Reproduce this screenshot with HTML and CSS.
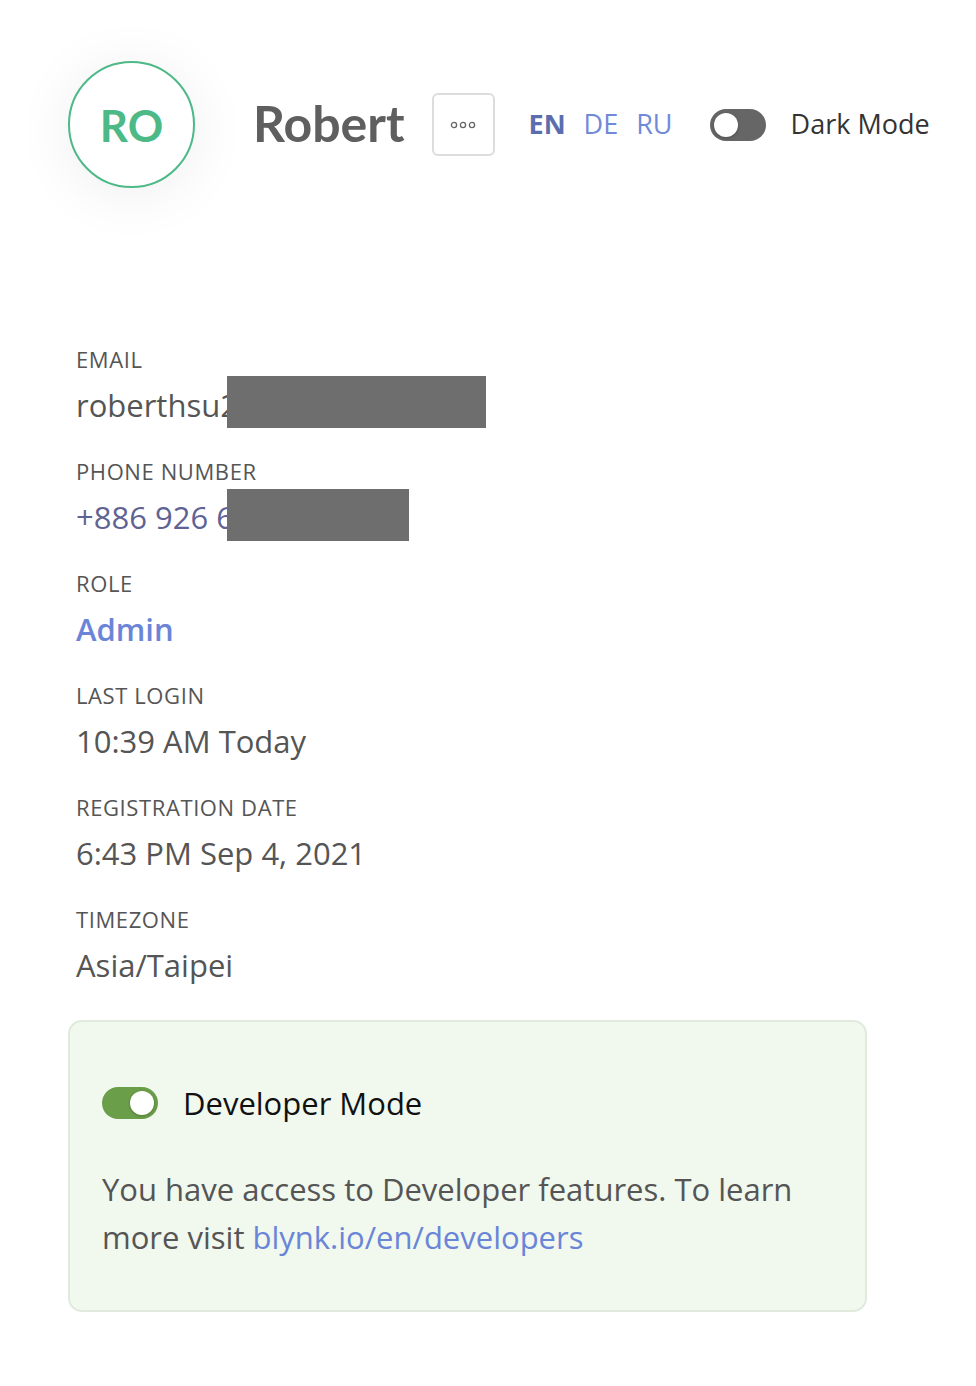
FILE: index.html
```html
<!DOCTYPE html>
<html lang="en">
<head>
<meta charset="utf-8">
<title>Profile</title>
<link rel="stylesheet" href="styles.css">
</head>
<body>
<div class="page">
  <header class="header">
    <div class="avatar">RO</div>
    <h1 class="name">Robert</h1>
    <button class="more" type="button" aria-label="More">
      <svg width="26" height="8" viewBox="0 0 26 8">
        <circle cx="4" cy="4" r="2.6" fill="none" stroke="#666" stroke-width="1.3"/>
        <circle cx="13" cy="4" r="2.6" fill="none" stroke="#666" stroke-width="1.3"/>
        <circle cx="22" cy="4" r="2.6" fill="none" stroke="#666" stroke-width="1.3"/>
      </svg>
    </button>
    <nav class="langs">
      <span class="lang active">EN</span>
      <span class="lang">DE</span>
      <span class="lang">RU</span>
    </nav>
    <div class="toggle-row">
      <span class="toggle dark"><span class="knob"></span></span>
      <span class="toggle-label">Dark Mode</span>
    </div>
  </header>

  <section class="info">
    <div class="field">
      <div class="label">EMAIL</div>
      <div class="value masked">roberthsu2<span class="redact redact-email"></span></div>
    </div>
    <div class="field">
      <div class="label">PHONE NUMBER</div>
      <div class="value phone masked">+886 926 6<span class="redact redact-phone"></span></div>
    </div>
    <div class="field">
      <div class="label">ROLE</div>
      <div class="value role">Admin</div>
    </div>
    <div class="field">
      <div class="label">LAST LOGIN</div>
      <div class="value">10:39 AM Today</div>
    </div>
    <div class="field">
      <div class="label">REGISTRATION DATE</div>
      <div class="value">6:43 PM Sep 4, 2021</div>
    </div>
    <div class="field">
      <div class="label">TIMEZONE</div>
      <div class="value">Asia/Taipei</div>
    </div>
  </section>

  <section class="dev-box">
    <div class="dev-row">
      <span class="toggle on"><span class="knob"></span></span>
      <span class="dev-title">Developer Mode</span>
    </div>
    <p class="dev-text">You have access to Developer features. To learn<br>more visit <a href="#" class="link">blynk.io/en/developers</a></p>
  </section>
</div>
</body>
</html>
```

FILE: styles.css
```css
* { box-sizing: border-box; }
html, body { margin: 0; padding: 0; background: #fff; }
body {
  font-family: "Open Sans", "Noto Sans", sans-serif;
  color: #555;
}
.page {
  width: 976px;
  min-height: 1386px;
  padding: 61px 0 0 68px;
}

/* Header */
.header {
  display: flex;
  align-items: center;
  height: 127px;
}
.avatar {
  width: 127px;
  height: 127px;
  border-radius: 50%;
  border: 2px solid #4cb987;
  background: #fff;
  box-shadow: 0 6px 60px rgba(0, 0, 0, 0.07);
  display: flex;
  align-items: center;
  justify-content: center;
  font-family: "Lato", "Open Sans", sans-serif;
  font-weight: 700;
  font-size: 44px;
  color: #4cb987;
  flex: none;
}
.name {
  margin: 0 0 3px 58px;
  font-family: "Lato", "Open Sans", sans-serif;
  font-weight: 700;
  font-size: 50px;
  color: #5f5f5f;
  line-height: 1;
}
.more {
  margin-left: 27px;
  width: 63px;
  height: 63px;
  border: 2px solid #dcdcdc;
  border-radius: 6px;
  background: #fff;
  display: flex;
  align-items: center;
  justify-content: center;
  padding: 0;
}
.langs {
  display: flex;
  gap: 18px;
  margin: 0 0 2px 34px;
  font-size: 27px;
}
.lang { color: #6f8ad8; }
.lang.active { color: #5a6eaf; font-weight: 700; }
.toggle-row {
  display: flex;
  align-items: center;
  margin-left: 37px;
}
.toggle {
  position: relative;
  width: 56px;
  height: 32px;
  border-radius: 16px;
  flex: none;
}
.toggle .knob {
  position: absolute;
  top: 4px;
  width: 24px;
  height: 24px;
  border-radius: 50%;
  background: #fff;
  box-shadow: 0 1px 3px rgba(0,0,0,0.25);
}
.toggle.dark { background: #666; }
.toggle.dark .knob { left: 4px; }
.toggle.on { background: #6a9e49; }
.toggle.on .knob { right: 4px; }
.toggle-label {
  margin: 0 0 2px 25px;
  font-size: 27px;
  color: #333;
}

/* Info */
.info {
  margin-top: 158px;
  padding-left: 8px;
}
.field { margin-bottom: 33px; }
.label {
  font-size: 22px;
  letter-spacing: 0.6px;
  line-height: 26px;
  color: #555;
  margin-bottom: 13px;
}
.value {
  font-size: 31px;
  line-height: 40px;
  color: #555;
}
.masked { position: relative; }
.redact {
  position: absolute;
  left: 151px;
  background: #6e6e6e;
  height: 52px;
}
.redact-email { top: -9px; width: 259px; }
.redact-phone { top: -8px; width: 182px; }
.phone { color: #5e6394; }
.role { color: #6a85d8; font-weight: 600; }

/* Developer box */
.dev-box {
  margin-top: 35px;
  width: 799px;
  border: 2px solid #e1eadd;
  border-radius: 14px;
  background: #f1f8ee;
  padding: 61px 40px 49px 32px;
}
.dev-row {
  display: flex;
  align-items: center;
  height: 40px;
}
.dev-title {
  margin-left: 25px;
  font-size: 31px;
  color: #111;
}
.dev-text {
  margin: 42px 0 0 0;
  font-size: 31px;
  line-height: 48px;
  color: #555;
}
.link { color: #6a85d8; text-decoration: none; }
```
